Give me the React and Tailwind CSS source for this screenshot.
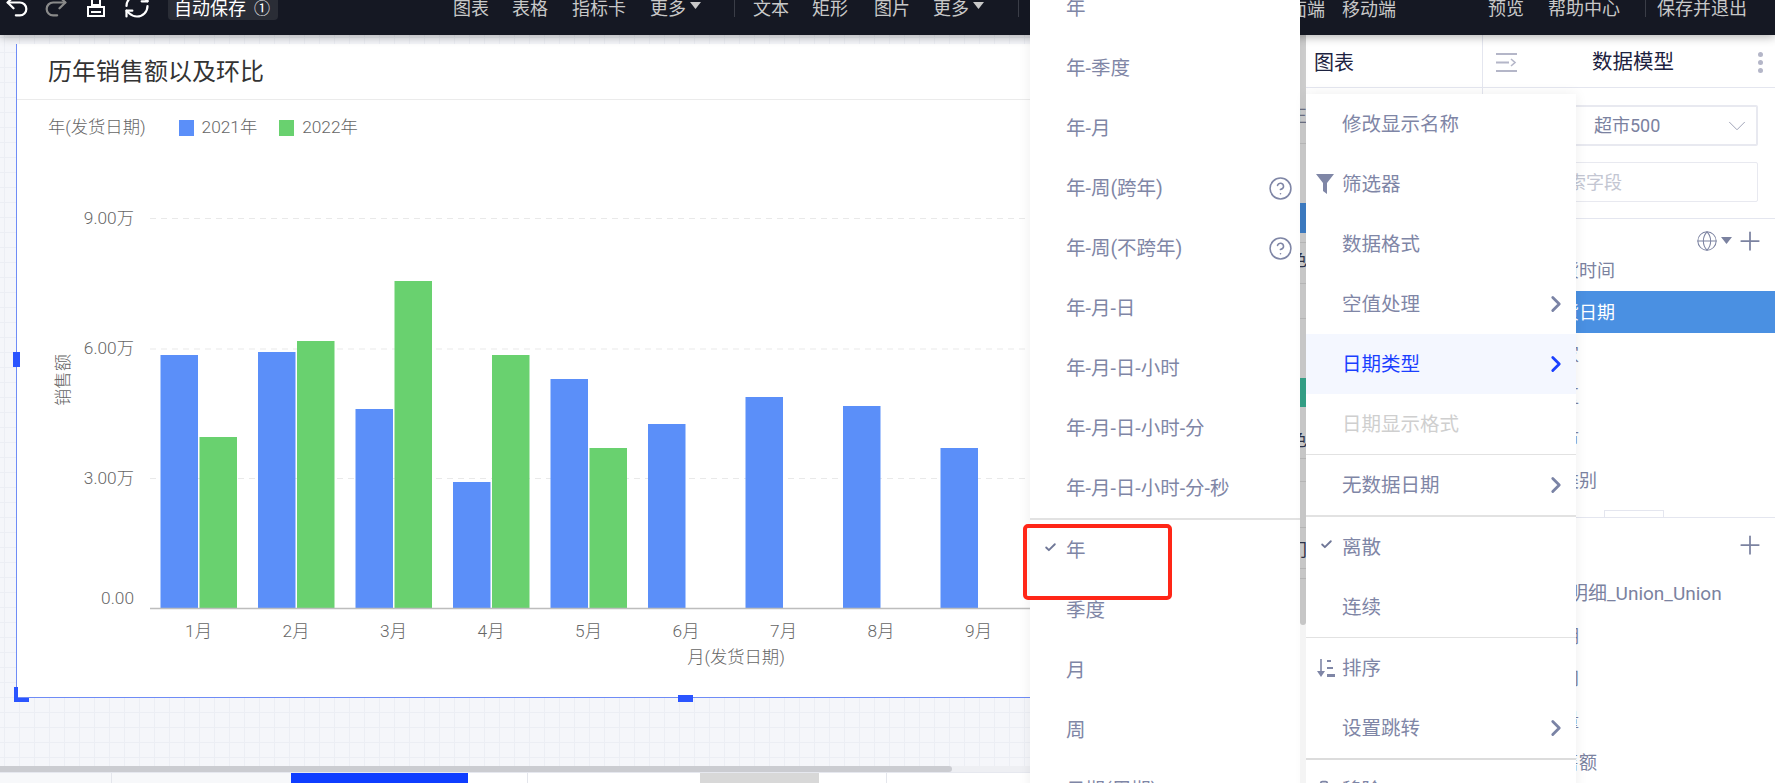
import React from "react";
import { Undo2, Redo2, RefreshCw, ChevronRight, ChevronDown, CircleHelp, Check, Globe, Plus, Trash2 } from "lucide-react";

const Tri = () => (
  <svg width="11" height="7" viewBox="0 0 11 7" className="ml-[4px] mb-[6px] shrink-0"><path d="M0 0h11L5.5 7z" fill="#c8c8c8" /></svg>
);
const Sep = ({ ml }) => <div className={`w-px h-[17px] bg-[#3a3d47] shrink-0 ${ml}`} />;

function TopBar() {
  return (
    <div className="relative z-10 h-[35px] shrink-0 bg-[#151823] shadow-[0_2px_9px_rgba(0,0,0,0.3)] overflow-hidden">
      <div className="flex h-[17px] items-center pl-[3px] text-[18px] leading-[17px] text-[#c8c8c8] whitespace-nowrap">
        <Undo2 size={28} color="#ffffff" strokeWidth={1.9} className="shrink-0 -mt-[6px]" />
        <Redo2 size={28} color="#8a8a8a" strokeWidth={1.9} className="shrink-0 ml-[11px] -mt-[6px]" />
        <svg width="18" height="18" viewBox="0 0 18 18" className="shrink-0 ml-[17px] -mt-[2px]" fill="none" stroke="#fff" strokeWidth="2">
          <path d="M5 -4h8v10H5z" /><path d="M1 8h16v9H1z" /><path d="M4 13h10" />
        </svg>
        <RefreshCw size={28} color="#ffffff" strokeWidth={1.9} className="shrink-0 ml-[18px] -mt-[6px]" />
        <div className="flex items-center shrink-0 ml-[17px] w-[110px] h-[46px] mt-[-23px] pt-[23px] pl-[6px] rounded-[4px] bg-[#2a2d36] text-white">
          <span>自动保存</span><span className="ml-[8px] text-[16px]">①</span>
        </div>
        <span className="ml-[175px]">图表</span>
        <span className="ml-[23px]">表格</span>
        <span className="ml-[24px]">指标卡</span>
        <span className="ml-[24px]">更多</span><Tri />
        <Sep ml="ml-[33px]" />
        <span className="ml-[18px]">文本</span>
        <span className="ml-[23px]">矩形</span>
        <span className="ml-[26px]">图片</span>
        <span className="ml-[23px]">更多</span><Tri />
        <Sep ml="ml-[34px]" />
        <span className="ml-[252px] mt-[2px]">桌面端</span>
        <span className="ml-[17px] mt-[2px]">移动端</span>
        <span className="ml-[92px]">预览</span>
        <span className="ml-[24px]">帮助中心</span>
        <Sep ml="ml-[25px]" />
        <span className="ml-[11px]">保存并退出</span>
      </div>
    </div>
  );
}

const BLUE = "#5b8ff9";
const GREEN = "#69d16f";
const BASE = 608;
const months = [
  { x: 160.5, m: "1月", b: 355, g: 437 },
  { x: 258, m: "2月", b: 352, g: 341 },
  { x: 355.5, m: "3月", b: 409, g: 281 },
  { x: 453, m: "4月", b: 482, g: 355 },
  { x: 550.5, m: "5月", b: 379, g: 448 },
  { x: 648, m: "6月", b: 424 },
  { x: 745.5, m: "7月", b: 397 },
  { x: 843, m: "8月", b: 406 },
  { x: 940.5, m: "9月", b: 448 },
];

function Chart() {
  return (
    <svg width="1274" height="542" viewBox="17 155 1274 542" className="block font-light text-[17.3px]">
      {[218.5, 349, 478.5].map((y) => (
        <line key={y} x1="150" x2="1040" y1={y} y2={y} stroke="#e9e9e9" strokeWidth="1" strokeDasharray="6 5" />
      ))}
      {[["9.00万", 224], ["6.00万", 354], ["3.00万", 484], ["0.00", 604]].map(([t, y]) => (
        <text key={t} x="134" y={y} textAnchor="end" fill="#666">{t}</text>
      ))}
      {months.map((d) => (
        <g key={d.m}>
          <rect x={d.x} y={d.b} width="37.5" height={BASE - d.b} fill={BLUE} />
          {d.g ? <rect x={d.x + 39} y={d.g} width="37.5" height={BASE - d.g} fill={GREEN} /> : null}
          <text x={d.x + 38} y="637" textAnchor="middle" fill="#666">{d.m}</text>
        </g>
      ))}
      <line x1="150" x2="1040" y1="608.5" y2="608.5" stroke="#bdbdbd" strokeWidth="1.5" />
      <text x="736" y="663" textAnchor="middle" fill="#666">月(发货日期)</text>
      <text transform="translate(69 380) rotate(-90)" textAnchor="middle" fill="#666">销售额</text>
    </svg>
  );
}

function Card() {
  return (
    <div className="relative w-[1290px] h-[654px] bg-white border-l border-b border-[#6f8cf6]">
      <div className="flex h-[56px] items-center pl-[31px] border-b border-[#ebebeb] text-[24px] text-[#333]">历年销售额以及环比</div>
      <div className="flex h-[55px] items-center pl-[31px] text-[17.3px] font-light text-[#666]">
        <span>年(发货日期)</span>
        <span className="ml-[33px] w-[15px] h-[16px] bg-[#5b8ff9]" />
        <span className="ml-[8px]">2021年</span>
        <span className="ml-[22px] w-[15px] h-[16px] bg-[#69d16f]" />
        <span className="ml-[8px]">2022年</span>
      </div>
      <Chart />
      <span className="absolute left-[-3px] top-[643px] w-[4px] h-[15px] bg-[#2b55ff]" />
      <span className="absolute left-[-3px] top-[654px] w-[15px] h-[4px] bg-[#2b55ff]" />
      <span className="absolute left-[-4px] top-[308px] w-[7px] h-[15px] bg-[#2b55ff]" />
      <span className="absolute left-[661px] top-[651px] w-[15px] h-[7px] bg-[#2b55ff]" />
    </div>
  );
}

function Canvas() {
  return (
    <div className="w-[1300px] shrink-0 flex flex-col overflow-hidden">
      <div className="flex-1 min-h-0 overflow-hidden pt-[9px] pl-[16px] bg-[#f5f6fa] bg-[linear-gradient(to_right,#eceef4_1px,transparent_1px),linear-gradient(to_bottom,#eceef4_1px,transparent_1px)] bg-[size:15px_15px] bg-[position:4px_2px]">
        <Card />
      </div>
      <div className="h-[6px] shrink-0 bg-[#eeeff3]">
        <div className="w-[952px] h-full rounded-r-[3px] bg-[#cbccd1]" />
      </div>
      <div className="h-[11px] shrink-0 flex bg-white border-t border-[#e6e8ef]">
        <div className="w-[112px] bg-[#f7f8fa] border-r border-[#e4e6ec]" />
        <div className="w-[179px] bg-[#f7f8fa]" />
        <div className="w-[177px] bg-[#0f3dff]" />
        <div className="w-[60px] border-r border-[#e4e6ec]" />
        <div className="w-[172px]" />
        <div className="w-[119px] bg-[#d8d8d8]" />
        <div className="w-[68px] border-r border-[#e4e6ec]" />
      </div>
    </div>
  );
}

const frags = [
  { top: 143, h: 1, c: "#bdbdbd" },
  { top: 203, h: 30, c: "#3f7fc8" },
  { top: 242, h: 1, c: "#bdbdbd" },
  { top: 283, h: 1, c: "#bdbdbd" },
  { top: 318, h: 1, c: "#bdbdbd" },
  { top: 378, h: 29, c: "#36a58b" },
  { top: 458, h: 1, c: "#bdbdbd" },
  { top: 481, h: 1, c: "#bdbdbd" },
  { top: 527, h: 1, c: "#bdbdbd" },
  { top: 568, h: 1, c: "#bdbdbd" },
  { top: 578, h: 1, c: "#bdbdbd" },
];
const glyphs = [
  { top: 106, t: "正", c: "#6f7386" },
  { top: 250, t: "色", c: "#30364d" },
  { top: 430, t: "色", c: "#30364d" },
  { top: 540, t: "门", c: "#30364d" },
];

function Strip() {
  return (
    <div className="relative w-[6px] shrink-0 bg-white">
      <div className="w-full h-[590px] rounded-b-[3px] bg-[#d0d0d0]" />
      {frags.map((f) => (
        <span key={f.top} className="absolute left-0 w-full" style={{ top: f.top - 35, height: f.h, background: f.c }} />
      ))}
      {glyphs.map((g) => (
        <span key={g.top} className="absolute left-0 w-full h-[20px] overflow-hidden text-[17px] leading-[20px] whitespace-nowrap" style={{ top: g.top - 35, color: g.c }}>
          <span className="block -ml-[10px]">{g.t}</span>
        </span>
      ))}
    </div>
  );
}

function MiddlePanel() {
  return (
    <div className="w-[177px] shrink-0 bg-white border-r border-[#e4e6ef]">
      <div className="h-[53px] flex items-center pl-[8px] pt-[3px] text-[20px] text-[#1d2240] border-b border-[#e4e6ef]">图表</div>
    </div>
  );
}

const Row = ({ t, active }) => (
  <div className={`h-[42px] shrink-0 flex items-center pl-[60px] ${active ? "bg-[#4a90e2] text-white" : ""}`}>{t}</div>
);

function RightPanel() {
  return (
    <div className="flex-1 min-w-0 flex flex-col bg-white text-[18px] text-[#7b82a0] overflow-hidden">
      <div className="h-[53px] shrink-0 relative flex items-center pl-[13px] pt-[3px] border-b border-[#e4e6ef]">
        <svg width="21" height="19" viewBox="0 0 21 19" fill="none" stroke="#b4b6c8" strokeWidth="2.2">
          <path d="M0 1h21M0 9.5h13M0 18h21" /><path d="M15 6l4 3.5-4 3.5" strokeWidth="1.6" />
        </svg>
        <span className="ml-[75px] text-[20.5px] text-[#1d2240]">数据模型</span>
        <span className="ml-auto mr-[12px] flex flex-col gap-[3px]">
          <i className="block w-[5px] h-[5px] rounded-full bg-[#b4b6c8]" />
          <i className="block w-[5px] h-[5px] rounded-full bg-[#b4b6c8]" />
          <i className="block w-[5px] h-[5px] rounded-full bg-[#b4b6c8]" />
        </span>
      </div>
      <div className="mt-[17px] mx-[17px] h-[41px] shrink-0 flex items-center pl-[92px] pr-[4px] border-2 border-[#e8e9f0] rounded-[2px]">
        <span>超市500</span>
        <ChevronDown size={30} strokeWidth={0.8} color="#a0a4b8" className="ml-auto" />
      </div>
      <div className="mt-[16px] mx-[17px] h-[40px] shrink-0 flex items-center pl-[49px] border border-[#e8e9f0] rounded-[2px] text-[#c3c6d2]">搜索字段</div>
      <div className="mt-[16px] h-[44px] shrink-0 flex items-center justify-end pr-[10px] border-t border-[#e4e6ef]">
        <Globe size={22} strokeWidth={1.1} color="#7b82a0" />
        <svg width="11" height="7" viewBox="0 0 11 7" className="ml-[3px]"><path d="M0 0h11L5.5 7z" fill="#7b82a0" /></svg>
        <Plus size={30} strokeWidth={1.4} color="#7b82a0" className="ml-[3px]" />
      </div>
      <div className="h-[256px] shrink-0 overflow-hidden flex flex-col border-b border-[#e4e6ef]">
        <div className="-mt-[13px] shrink-0 flex flex-col">
          <Row t="发货时间" />
          <Row t="发货日期" active />
          <Row t="国家" />
          <Row t="地区" />
          <Row t="城市" />
          <Row t="子类别" />
        </div>
        <div className="ml-[121px] w-[60px] h-[9px] shrink-0 mt-[9px] border border-b-0 border-[#e4e6ef]" />
      </div>
      <div className="h-[55px] shrink-0 flex items-center justify-end pr-[10px]">
        <Plus size={30} strokeWidth={1.4} color="#7b82a0" className="-mt-[2px]" />
      </div>
      <div className="flex flex-col">
        <div className="h-[42px] shrink-0 flex items-center pl-[48px] text-[19px]">订单明细_Union_Union</div>
        <Row t="日期" />
        <Row t="时间" />
        <Row t="数量" />
        <Row t="销售额" />
      </div>
    </div>
  );
}

const MI = ({ t, left, help, arrow, active, disabled }) => (
  <div className={`h-[60px] shrink-0 flex items-center text-[19.5px] ${active ? "bg-[#f4f7ff] text-[#1a3fff]" : disabled ? "text-[#cfcfcf]" : "text-[#7f86a6]"}`}>
    <span className="w-[36px] shrink-0 flex items-center justify-center">{left}</span>
    <span className="mt-[2px]">{t}</span>
    {help ? <CircleHelp size={25} strokeWidth={1.5} color="#7f86a6" className="ml-auto mr-[7px]" /> : null}
    {arrow ? <ChevronRight size={26} strokeWidth={2.6} color={active ? "#1a3fff" : "#7a83a5"} className="ml-auto mr-[7px]" /> : null}
  </div>
);

const Tick = () => <Check size={13} strokeWidth={3.4} color="#6f7797" className="ml-[4px] -mt-[6px]" />;

function DateMenu() {
  return (
    <div className="absolute left-[1030px] top-[-22px] z-20 w-[270px] h-[830px] flex flex-col bg-white shadow-[0_0_12px_rgba(0,0,0,0.07)]">
      <MI t="年" />
      <MI t="年-季度" />
      <MI t="年-月" />
      <MI t="年-周(跨年)" help />
      <MI t="年-周(不跨年)" help />
      <MI t="年-月-日" />
      <MI t="年-月-日-小时" />
      <MI t="年-月-日-小时-分" />
      <MI t="年-月-日-小时-分-秒" />
      <div className="h-[2px] shrink-0 bg-[#e2e2e2]" />
      <MI t="年" left={<Tick />} />
      <MI t="季度" />
      <MI t="月" />
      <MI t="周" />
      <MI t="日期(周期)" />
    </div>
  );
}

function FieldMenu() {
  return (
    <div className="absolute left-[1306px] top-[94px] z-20 w-[270px] h-[700px] flex flex-col bg-white shadow-[0_0_12px_rgba(0,0,0,0.07)]">
      <MI t="修改显示名称" />
      <MI t="筛选器" left={
        <svg width="18" height="20" viewBox="0 0 18 20" className="ml-[1px]"><path d="M0 0h18L11 9v11l-4-3V9z" fill="#7f86a6" /></svg>
      } />
      <MI t="数据格式" />
      <MI t="空值处理" arrow />
      <MI t="日期类型" arrow active />
      <MI t="日期显示格式" disabled />
      <div className="h-px shrink-0 bg-[#e2e2e2]" />
      <MI t="无数据日期" arrow />
      <div className="h-[2px] shrink-0 bg-[#e2e2e2]" />
      <MI t="离散" left={<Tick />} />
      <MI t="连续" />
      <div className="h-px shrink-0 bg-[#e2e2e2]" />
      <MI t="排序" left={
        <svg width="18" height="19" viewBox="0 0 18 19" className="ml-[4px]" fill="#7f86a6"><path d="M3.2 0h1.6v14H3.2z" /><path d="M0 12h8l-4 6z" /><path d="M10 1h4v2h-4zM10 8h6v2h-6zM10 15h8v3h-8z" /></svg>
      } />
      <MI t="设置跳转" arrow />
      <div className="h-[2px] shrink-0 bg-[#dcdcdc]" />
      <MI t="移除" left={<Trash2 size={20} strokeWidth={2} color="#7f86a6" />} />
    </div>
  );
}

export default function App() {
  return (
    <div className="relative w-[1775px] h-[783px] flex flex-col overflow-hidden bg-white font-['Roboto','Noto_Sans_CJK_SC',sans-serif]">
      <TopBar />
      <div className="flex flex-1 min-h-0">
        <Canvas />
        <Strip />
        <MiddlePanel />
        <RightPanel />
      </div>
      <DateMenu />
      <FieldMenu />
      <div className="absolute left-[1023px] top-[524px] z-30 w-[149px] h-[76px] border-4 border-[#ff2617] rounded-[5px]" />
    </div>
  );
}
